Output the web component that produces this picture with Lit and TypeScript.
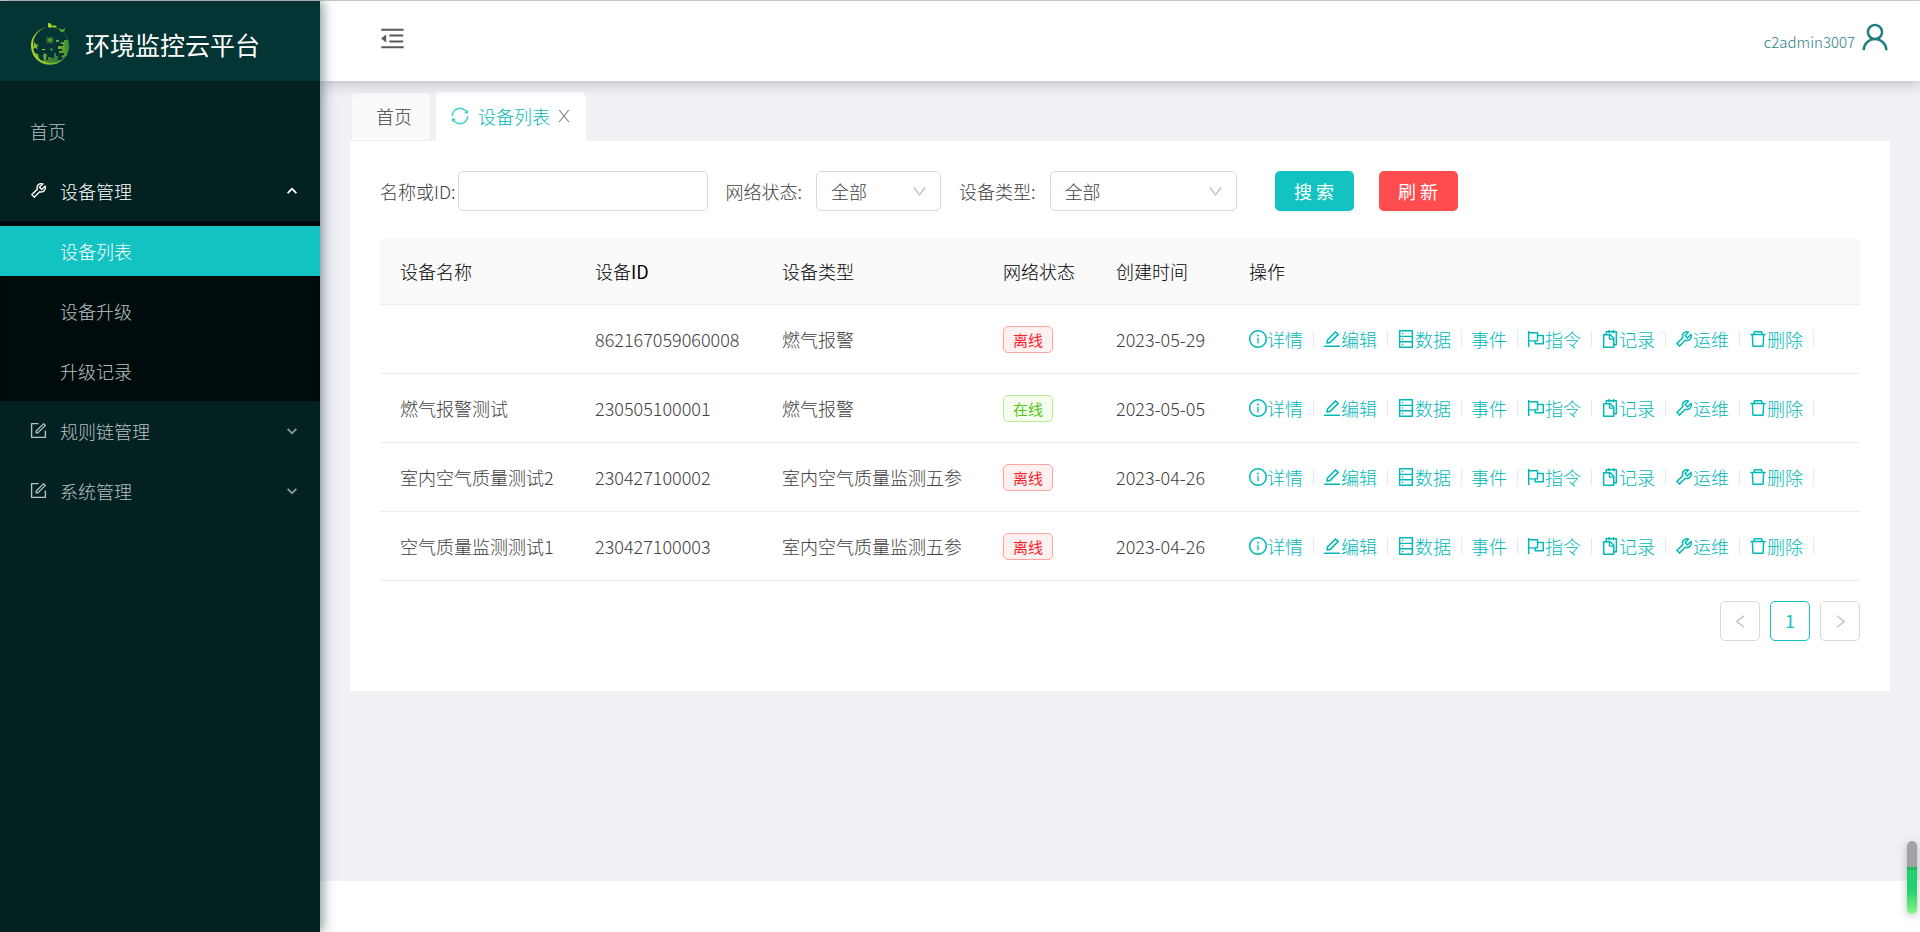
import { LitElement, html, css, svg } from "lit";
import { customElement, property, state } from "lit/decorators.js";
import { classMap } from "lit/directives/class-map.js";

const ICONS: Record<string, string[]> = {
  tool: ["M876.6 239.5c-.5-.9-1.2-1.8-2-2.5-5-5-13.1-5-18.1 0L684.2 409.3l-67.9-67.9L788.7 169c.8-.8 1.4-1.6 2-2.5 3.6-6.1 1.6-13.9-4.5-17.5-98.2-58-226.8-44.7-311.3 39.7-67 67-89.2 162-66.5 247.4l-293 293c-3 3-2.8 7.9.3 11l169.7 169.7c3.1 3.1 8.1 3.3 11 .3l292.9-292.9c85.5 22.8 180.5.7 247.6-66.4 84.4-84.5 97.7-213.1 39.7-311.3zM786 499.8c-58.1 58.1-145.3 69.3-214.6 33.6l-8.8 8.8-.1-.1-274 274.1-79.2-79.2 230.1-230.1s0 .1.1.1l52.8-52.8c-35.7-69.3-24.5-156.5 33.6-214.6a184.2 184.2 0 01144-53.5L537 318.9a32.05 32.05 0 000 45.3l124.5 124.5a32.05 32.05 0 0045.3 0l132.8-132.8c3.7 51.8-14.4 104.8-53.6 143.9z"],
  form: [
    "M904 512h-56c-4.4 0-8 3.6-8 8v320H184V184h320c4.4 0 8-3.6 8-8v-56c0-4.4-3.6-8-8-8H144c-17.7 0-32 14.3-32 32v736c0 17.7 14.3 32 32 32h736c17.7 0 32-14.3 32-32V520c0-4.4-3.6-8-8-8z",
    "M355.9 534.9L354 653.8c-.1 8.9 7.1 16.2 16 16.2h.4l118-2.9c2-.1 4-.9 5.4-2.3l415.9-415c3.1-3.1 3.1-8.2 0-11.3L785.4 114.3c-1.6-1.6-3.6-2.3-5.7-2.3s-4.1.8-5.7 2.3l-415.8 415a8.3 8.3 0 00-2.3 5.6zm63.5 23.6L779.7 199l45.2 45.1-360.5 359.7-45.7 1.1.7-46.4z",
  ],
  down: ["M884 256h-75c-5.1 0-9.9 2.5-12.9 6.6L512 654.2 227.9 262.6c-3-4.1-7.8-6.6-12.9-6.6h-75c-6.5 0-10.3 7.4-6.5 12.7l352.6 486.1c12.8 17.6 39 17.6 51.7 0l352.6-486.1c3.9-5.3.1-12.7-6.4-12.7z"],
  info: [
    "M512 64C264.6 64 64 264.6 64 512s200.6 448 448 448 448-200.6 448-448S759.4 64 512 64zm0 820c-205.4 0-372-166.6-372-372s166.6-372 372-372 372 166.6 372 372-166.6 372-372 372z",
    "M464 336a48 48 0 1096 0 48 48 0 10-96 0zm72 112h-48c-4.4 0-8 3.6-8 8v272c0 4.4 3.6 8 8 8h48c4.4 0 8-3.6 8-8V456c0-4.4-3.6-8-8-8z",
  ],
  edit: ["M257.7 752c2 0 4-.2 6-.5L431.9 722c2-.4 3.9-1.3 5.3-2.8l423.9-423.9a9.96 9.96 0 000-14.1L694.9 114.9c-1.9-1.9-4.4-2.9-7.1-2.9s-5.2 1-7.1 2.9L256.8 538.8c-1.5 1.5-2.4 3.3-2.8 5.3l-29.5 168.2a33.5 33.5 0 009.4 29.8c6.6 6.4 14.9 9.9 23.8 9.9zm67.4-174.4L687.8 215l73.3 73.3-362.7 362.6-88.9 15.7 15.6-89zM880 836H144c-17.7 0-32 14.3-32 32v36c0 4.4 3.6 8 8 8h784c4.4 0 8-3.6 8-8v-36c0-17.7-14.3-32-32-32z"],
  database: ["M832 64H192c-17.7 0-32 14.3-32 32v832c0 17.7 14.3 32 32 32h640c17.7 0 32-14.3 32-32V96c0-17.7-14.3-32-32-32zm-600 72h560v208H232V136zm560 480H232V408h560v208zm0 272H232V680h560v208zM304 240a40 40 0 1080 0 40 40 0 10-80 0zm0 272a40 40 0 1080 0 40 40 0 10-80 0zm0 272a40 40 0 1080 0 40 40 0 10-80 0z"],
  flag: ["M880 305H624V192c0-17.7-14.3-32-32-32H184v-40c0-4.4-3.6-8-8-8h-56c-4.4 0-8 3.6-8 8v784c0 4.4 3.6 8 8 8h56c4.4 0 8-3.6 8-8V640h248v113c0 17.7 14.3 32 32 32h416c17.7 0 32-14.3 32-32V337c0-17.7-14.3-32-32-32zM184 568V232h368v336H184zm656 145H504v-73h112c4.4 0 8-3.6 8-8V377h216v336z"],
  snippets: ["M832 112H724V72c0-4.4-3.6-8-8-8h-56c-4.4 0-8 3.6-8 8v40H500V72c0-4.4-3.6-8-8-8h-56c-4.4 0-8 3.6-8 8v40H320c-17.7 0-32 14.3-32 32v120h-96c-17.7 0-32 14.3-32 32v632c0 17.7 14.3 32 32 32h512c17.7 0 32-14.3 32-32v-96h96c17.7 0 32-14.3 32-32V144c0-17.7-14.3-32-32-32zM664 888H232V336h218v174c0 22.1 17.9 40 40 40h174v338zm0-402H514V336h.2L664 485.8v.2zm128 274h-56V456L544 264H360v-80h68v32c0 4.4 3.6 8 8 8h56c4.4 0 8-3.6 8-8v-32h152v32c0 4.4 3.6 8 8 8h56c4.4 0 8-3.6 8-8v-32h68v576z"],
  trash: ["M360 184h-8c4.4 0 8-3.6 8-8v8h304v-8c0 4.4 3.6 8 8 8h-8v72h72v-80c0-35.3-28.7-64-64-64H352c-35.3 0-64 28.7-64 64v80h72v-72zm504 72H160c-17.7 0-32 14.3-32 32v32c0 4.4 3.6 8 8 8h60.4l24.7 523c1.6 34.1 29.8 61 63.9 61h454c34.2 0 62.3-26.8 63.9-61l24.7-523H888c4.4 0 8-3.6 8-8v-32c0-17.7-14.3-32-32-32zM731.3 840H292.7l-24.2-512h487l-24.2 512z"],
  user: ["M858.5 763.6a374 374 0 00-80.6-119.5 375.63 375.63 0 00-119.5-80.6c-.4-.2-.8-.3-1.2-.5C719.5 518 760 444.7 760 362c0-137-111-248-248-248S264 225 264 362c0 82.7 40.5 156 102.8 201.1-.4.2-.8.3-1.2.5-44.8 18.9-85 46-119.5 80.6a375.63 375.63 0 00-80.6 119.5A371.7 371.7 0 00136 901.8a8 8 0 008 8.2h60c4.4 0 7.9-3.5 8-7.8 2-77.2 33-149.5 87.8-204.3 56.7-56.7 132-87.9 212.2-87.9s155.5 31.2 212.2 87.9C779 752.7 810 825 812 902.2c.1 4.4 3.6 7.8 8 7.8h60a8 8 0 008-8.2c-1-47.8-10.9-94.3-29.5-138.2zM512 534c-45.9 0-89.1-17.9-121.6-50.4S340 407.9 340 362c0-45.9 17.9-89.1 50.4-121.6S466.1 190 512 190s89.1 17.9 121.6 50.4S684 316.1 684 362c0 45.9-17.9 89.1-50.4 121.6S557.9 534 512 534z"],
  fold: ["M408 442h480c4.4 0 8-3.6 8-8v-56c0-4.4-3.6-8-8-8H408c-4.4 0-8 3.6-8 8v56c0 4.4 3.6 8 8 8zm-8 204c0 4.4 3.6 8 8 8h480c4.4 0 8-3.6 8-8v-56c0-4.4-3.6-8-8-8H408c-4.4 0-8 3.6-8 8v56zm504-486H120c-4.4 0-8 3.6-8 8v56c0 4.4 3.6 8 8 8h784c4.4 0 8-3.6 8-8v-56c0-4.4-3.6-8-8-8zm0 632H120c-4.4 0-8 3.6-8 8v56c0 4.4 3.6 8 8 8h784c4.4 0 8-3.6 8-8v-56c0-4.4-3.6-8-8-8zM115.4 518.9L271.7 642c5.8 4.6 14.4.5 14.4-6.9V388.9c0-7.4-8.5-11.5-14.4-6.9L115.4 505.1a8.74 8.74 0 000 13.8z"],
  sync: ["M168 504.2c1-43.7 10-86.1 26.9-126 17.3-41 42.1-77.7 73.7-109.4S337 212.3 378 195c42.4-17.9 87.4-27 133.9-27s91.5 9.1 133.8 27A341.5 341.5 0 01755 268.8c9.9 9.9 19.2 20.4 27.8 31.4l-60.2 47a8 8 0 003 14.1l175.7 43c5 1.2 9.9-2.6 9.9-7.7l.8-180.9c0-6.7-7.7-10.5-12.9-6.3l-56.4 44.1C765.8 155.1 646.2 92 511.8 92 282.7 92 96.3 275.6 92 503.8a8 8 0 008 8.2h60c4.4 0 7.9-3.5 8-7.8zm756 7.8h-60c-4.4 0-7.9 3.5-8 7.8-1 43.7-10 86.1-26.9 126-17.3 41-42.1 77.8-73.7 109.4A342.45 342.45 0 01512.1 856a342.24 342.24 0 01-243.2-100.8c-9.9-9.9-19.2-20.4-27.8-31.4l60.2-47a8 8 0 00-3-14.1l-175.7-43c-5-1.2-9.9 2.6-9.9 7.7l-.7 181c0 6.7 7.7 10.5 12.9 6.3l56.4-44.1C258.2 868.9 377.8 932 512.2 932c229.2 0 415.5-183.7 419.8-411.8a8 8 0 00-8-8.2z"],
  left: ["M724 218.3V141c0-6.7-7.7-10.4-12.9-6.3L260.3 486.8a31.86 31.86 0 000 50.3l450.8 352.1c5.3 4.1 12.9.4 12.9-6.3v-77.3c0-4.9-2.3-9.6-6.1-12.6l-360-281 360-281.1c3.8-3 6.1-7.7 6.1-12.6z"],
  right: ["M765.7 486.8L314.9 134.7A7.97 7.97 0 00302 141v77.3c0 4.9 2.3 9.6 6.1 12.6l360 281.1-360 281.1c-3.9 3-6.1 7.7-6.1 12.6V883c0 6.7 7.7 10.4 12.9 6.3l450.8-352.1a31.96 31.96 0 000-50.4z"],
  close: ["M166 120h90l256 330 256-330h90L558 510 866 900h-90L512 570 248 900h-90L466 510z"],
  caret: ["M137 620L512 245l375 375-100 100-275-275-275 275z"],
};

@customElement("ui-icon")
export class UiIcon extends LitElement {
  @property() name = "";

  static styles = css`
    :host { display: inline-block; width: 1em; height: 1em; flex: none; }
    svg { display: block; width: 100%; height: 100%; }
  `;

  render() {
    return html`<svg viewBox="64 64 896 896" fill="currentColor" aria-hidden="true">
      ${(ICONS[this.name] ?? []).map((d) => svg`<path d=${d}></path>`)}
    </svg>`;
  }
}

@customElement("brand-logo")
export class BrandLogo extends LitElement {
  static styles = css`
    :host { display: block; width: 40px; height: 44px; flex: none; }
    svg { display: block; width: 100%; height: 100%; }
  `;

  render() {
    return html`<svg viewBox="0 0 40 44" aria-hidden="true">
      <defs>
        <linearGradient id="g" x1="0" y1="0" x2="1" y2="0">
          <stop offset="0" stop-color="#b5d327"></stop>
          <stop offset="1" stop-color="#3fae3b"></stop>
        </linearGradient>
      </defs>
      <g fill="url(#g)">
        <path d="M17 5A19 19 0 1 0 39 24a18 17.500 0 0 1-36-1C3 14 9 7 17 5z"></path>
        <path d="M18 1c3 0 4 2 4 3 2-1 4-1 5 1-2 1-4 1-5 0-1 1-3 1-4 0zM29 6l3 2 3-2c0 3-1 4-3 4-1 0-3-2-3-4z"></path>
        <path d="M32 20h2v-2h4l1 8-2 7-4 3-2-2 3-1v-2h-5v-2h3v-2h-4v-3h5v-2h-3z" opacity=".75"></path>
        <path d="M22 36h2v-5h2v3h2v4h3l-2 2-9 2-9-3 3-1v-3h2v3h2v-3h2z" opacity=".55"></path>
        <path d="M4 20l3 3 2-1-2 3 1 2-3-1-2 1zM20 27l2-1 1 2-2 1zM13 33l2-2 2 2-1 4-2 1zM5 31l3 1 1 4-3-1z" opacity=".85"></path>
        <path d="M26 18h3v2h-3zM12 27h3v1h-3z"></path>
      </g>
      <path d="M20 15v7M16 18h8M17 15l6 6M23 15l-6 6" stroke="#7cc433" stroke-width=".8"></path>
      <path d="M22 5a19 19 0 0 1 17 20" fill="none" stroke="#3fae3b" stroke-width=".7" opacity=".6"></path>
    </svg>`;
  }
}

interface Device { name: string; id: string; type: string; online: boolean; date: string; }

const DEVICES: Device[] = [
  { name: "", id: "862167059060008", type: "燃气报警", online: false, date: "2023-05-29" },
  { name: "燃气报警测试", id: "230505100001", type: "燃气报警", online: true, date: "2023-05-05" },
  { name: "室内空气质量测试2", id: "230427100002", type: "室内空气质量监测五参", online: false, date: "2023-04-26" },
  { name: "空气质量监测测试1", id: "230427100003", type: "室内空气质量监测五参", online: false, date: "2023-04-26" },
];

const ACTIONS: [string, string][] = [
  ["info", "详情"], ["edit", "编辑"], ["database", "数据"], ["", "事件"],
  ["flag", "指令"], ["snippets", "记录"], ["tool", "运维"], ["trash", "删除"],
];

@customElement("side-menu")
export class SideMenu extends LitElement {
  static styles = css`
    :host { display: block; width: 320px; flex: none; background: #032121; color: #b9c2c2; box-shadow: 2px 0 12px rgba(0, 21, 41, .5); z-index: 2; }
    .brand { display: flex; align-items: center; gap: 15px; height: 80px; padding: 5px 30px 0; background: #053434; color: #fff; font-size: 25px; font-weight: 400; box-sizing: border-box; }
    .brand h1 { margin: 0; font: inherit; line-height: 40px; }
    nav { padding-top: 20px; }
    ul { list-style: none; margin: 0; padding: 0; }
    .link { display: flex; align-items: center; width: 100%; height: 50px; margin: 5px 0; padding: 0 22px 1px 30px; box-sizing: border-box; border: 0; background: none; color: inherit; font: inherit; text-align: left; text-decoration: none; cursor: pointer; }
    .link .text { flex: 1; }
    .lead { font-size: 17px; margin-right: 13px; }
    .arrow { font-size: 12px; }
    .flip { transform: rotate(180deg); color: #8a9999; }
    .open { color: #fff; }
    .sub { background: #000c0c; display: flow-root; box-shadow: inset 0 2px 8px rgba(0, 0, 0, .45); }
    .sub .link { padding-left: 60px; }
    .sub li { display: flow-root; }
    .sub .active { background: #13c2c2; color: #fff; }
    .item { display: flow-root; }
  `;

  render() {
    return html`
      <div class="brand"><brand-logo></brand-logo><h1>环境监控云平台</h1></div>
      <nav><ul>
        <li class="item"><a class="link" href="#home"><span class="text">首页</span></a></li>
        <li class="item"><button class="link open" aria-expanded="true"><ui-icon class="lead" name="tool"></ui-icon><span class="text">设备管理</span><ui-icon class="arrow" name="caret"></ui-icon></button></li>
        <li><ul class="sub">
            <li><a class="link active" href="#devices">设备列表</a></li>
            <li><a class="link" href="#upgrade">设备升级</a></li>
            <li><a class="link" href="#records">升级记录</a></li>
        </ul></li>
        ${["规则链管理", "系统管理"].map((t) => html`<li class="item"><button class="link" aria-expanded="false"><ui-icon class="lead" name="form"></ui-icon><span class="text">${t}</span><ui-icon class="arrow flip" name="caret"></ui-icon></button></li>`)}
      </ul></nav>`;
  }
}

@customElement("device-table")
export class DeviceTable extends LitElement {
  @property({ attribute: false }) rows: Device[] = [];

  static styles = css`
    :host { display: block; }
    table { width: 100%; border-collapse: separate; border-spacing: 0; table-layout: fixed; }
    th, td { box-sizing: border-box; padding: 0 0 0 20px; text-align: left; border-bottom: 1px solid #ebebeb; white-space: nowrap; }
    th { height: 67px; padding-bottom: 1px; background: #fafafa; color: #000; font-weight: 300; }
    .latin { font-weight: 400; }
    th:first-child { border-radius: 5px 0 0 0; }
    th:last-child { border-radius: 0 5px 0 0; }
    td { height: 69px; }
    .c-name { width: 195px; } .c-id { width: 187px; } .c-type { width: 221px; }
    .c-net { width: 113px; } .c-date { width: 133px; }
    .tag { display: block; width: max-content; padding: 0 9px; border: 1px solid #ffa39e; border-radius: 5px; background: #fff1f0; color: #f5222d; font-size: 15px; font-weight: 400; line-height: 25px; }
    .on { border-color: #b7eb8f; background: #f6ffed; color: #52c41a; }
    .actions { display: flex; align-items: center; }
    a { display: flex; align-items: center; color: #00b8b8; text-decoration: none; line-height: 28px; }
    .bar { width: 1px; height: 16px; margin: 0 9px 0 10px; background: #e8e8e8; }
  `;

  render() {
    return html`<table>
      <thead><tr>
        <th class="c-name">设备名称</th><th class="c-id">设备<span class="latin">ID</span></th><th class="c-type">设备类型</th>
        <th class="c-net">网络状态</th><th class="c-date">创建时间</th><th>操作</th>
      </tr></thead>
      <tbody>
        ${this.rows.map((r) => html`<tr>
          <td>${r.name}</td><td>${r.id}</td><td>${r.type}</td>
          <td><span class=${classMap({ tag: true, on: r.online })}>${r.online ? "在线" : "离线"}</span></td>
          <td>${r.date}</td>
          <td><div class="actions">${ACTIONS.map(([icon, t]) => html`<a href="#device">${icon ? html`<ui-icon name=${icon}></ui-icon>` : ""}<span>${t}</span></a><span class="bar"></span>`)}</div></td>
        </tr>`)}
      </tbody>
    </table>`;
  }
}

@customElement("app-root")
export class AppRoot extends LitElement {
  @state() private rows = DEVICES;

  static styles = css`
    :host { display: flex; min-height: 100vh; box-sizing: border-box; border-top: 1px solid #d9d9d9; background: #fff; color: #404040; font-family: "Noto Sans CJK SC", "Noto Sans", sans-serif; font-size: 18px; font-weight: 300; line-height: 28px; }
    .main { flex: 1; min-width: 0; display: flex; flex-direction: column; }
    header { display: flex; align-items: center; justify-content: space-between; height: 80px; padding: 0 30px 5px 60px; box-sizing: border-box; background: #fff; box-shadow: 0 2px 14px rgba(0, 21, 41, .25); z-index: 1; }
    .fold { display: flex; padding: 0; border: 0; background: none; color: #595959; font-size: 25px; cursor: pointer; }
    .account { display: flex; align-items: center; gap: 5px; padding-bottom: 4px; color: #1f7f7f; text-decoration: none; }
    .account span { font-size: 15px; padding-top: 10px; }
    .account ui-icon { font-size: 30px; }
    .content { flex: 1; padding: 11px 30px 0; background: #f0f1f5; }
    .tabs { display: flex; gap: 5px; padding-left: 1px; }
    .tab { display: flex; align-items: center; height: 49px; padding: 0 18px 2px 24px; box-sizing: border-box; border: 1px solid #ededed; border-radius: 5px 5px 0 0; background: #fafafa; color: inherit; font: inherit; }
    .current { gap: 9px; padding: 0 14px 2px; border-color: #fff; background: #fff; color: #00b8b8; }
    .current .spin { opacity: .7; font-size: 18px; }
    .x { display: flex; padding: 0; margin-left: -2px; border: 0; background: none; color: #8c8c8c; font-size: 14px; }
    .panel { padding: 30px 30px 50px; background: #fff; }
    form { display: flex; align-items: center; margin-bottom: 27px; }
    label { line-height: 40px; white-space: nowrap; }
    input, select { height: 40px; box-sizing: border-box; border: 1px solid #d9d9d9; border-radius: 5px; background: #fff; color: inherit; font: inherit; }
    input { width: 250px; margin: 0 18px 0 2px; padding: 0 14px; }
    .pick { display: grid; align-items: center; margin: 0 18px 0 14px; }
    .pick select, .pick ui-icon { grid-area: 1 / 1; }
    .pick select { width: 100%; padding: 0 14px; appearance: none; }
    .pick ui-icon { justify-self: end; margin-right: 14px; color: #bfbfbf; font-size: 15px; pointer-events: none; }
    .short { width: 125px; }
    .long { width: 187px; margin-right: 38px; }
    .btn { display: flex; align-items: center; justify-content: center; width: 79px; height: 40px; margin-right: 25px; padding: 0; border: 0; border-radius: 5px; background: #13c2c2; color: #fff; font: inherit; font-weight: 400; box-shadow: 0 2px 0 rgba(0, 0, 0, .04); white-space: pre; }
    .danger { background: #ff4d4f; }
    .pages { display: flex; justify-content: flex-end; gap: 10px; margin-top: 20px; }
    .page { display: flex; align-items: center; justify-content: center; width: 40px; height: 40px; padding: 0; border: 1px solid #d9d9d9; border-radius: 5px; background: #fff; color: #bfbfbf; font: inherit; font-size: 15px; box-sizing: border-box; }
    .page.here { padding-bottom: 3px; border-color: #13c2c2; color: #13c2c2; font-size: 18px; font-weight: 400; }
    footer { height: 51px; }
    .gauge { position: fixed; right: 3px; bottom: 18px; width: 10px; height: 73px; border-radius: 5px; background: linear-gradient(#a3a3a3 0 26px, #1fb965 26px 29px, #25d06f 29px 50px, #86f783 100%); box-shadow: 0 2px 8px rgba(0, 0, 0, .25); z-index: 3; }
  `;

  render() {
    return html`
      <side-menu></side-menu>
      <div class="main">
        <header>
          <button class="fold" aria-label="收起菜单"><ui-icon name="fold"></ui-icon></button>
          <a class="account" href="#account"><span>c2admin3007</span><ui-icon name="user"></ui-icon></a>
        </header>
        <div class="content">
          <div class="tabs">
            <button class="tab">首页</button>
            <div class="tab current"><ui-icon class="spin" name="sync"></ui-icon><span>设备列表</span><button class="x" aria-label="关闭"><ui-icon name="close"></ui-icon></button></div>
          </div>
          <div class="panel">
            <form @submit=${(e: Event) => e.preventDefault()}>
              <label for="key">名称或ID:</label><input id="key" type="text">
              <label for="net">网络状态:</label>
              <span class="pick short"><select id="net"><option>全部</option><option>在线</option><option>离线</option></select><ui-icon name="down"></ui-icon></span>
              <label for="type">设备类型:</label>
              <span class="pick long"><select id="type"><option>全部</option><option>燃气报警</option></select><ui-icon name="down"></ui-icon></span>
              <button class="btn" type="submit">搜 索</button>
              <button class="btn danger" type="button">刷 新</button>
            </form>
            <device-table .rows=${this.rows}></device-table>
            <div class="pages">
              <button class="page" aria-label="上一页"><ui-icon name="left"></ui-icon></button>
              <button class="page here">1</button>
              <button class="page" aria-label="下一页"><ui-icon name="right"></ui-icon></button>
            </div>
          </div>
        </div>
        <footer></footer>
      </div>
      <div class="gauge"></div>`;
  }
}
